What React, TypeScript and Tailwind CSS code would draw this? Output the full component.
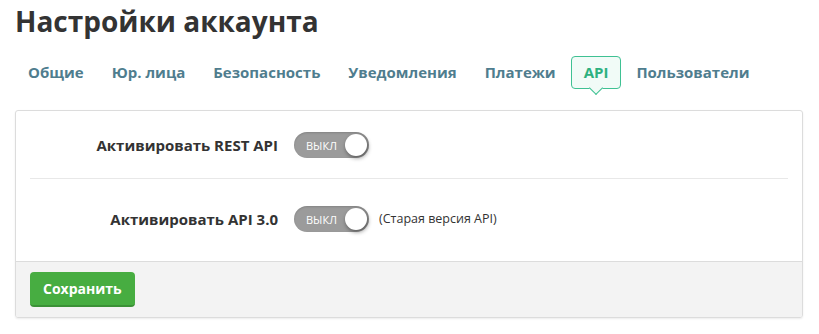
import React from "react";

const tabs = ["Общие", "Юр. лица", "Безопасность", "Уведомления", "Платежи", "API", "Пользователи"];

function Toggle() {
  return (
    <div className="relative flex h-[26px] w-[75px] shrink-0 items-center rounded-full bg-[#9b9b9b] shadow-[inset_0_1px_2px_rgba(0,0,0,0.15)]">
      <span className="pl-[12px] text-[11px] leading-none text-white">ВЫКЛ</span>
      <span className="absolute right-[2px] top-[2px] h-[22px] w-[22px] rounded-full bg-white shadow-[1px_2px_4px_rgba(0,0,0,0.45)]" />
    </div>
  );
}

export default function App() {
  return (
    <div className="min-h-[334px] bg-white px-[15px] text-[#333]" style={{ fontFamily: '"Open Sans", sans-serif' }}>
      <h1 className="pt-[5px] text-[28px] font-bold leading-[32px] text-[#333]">Настройки аккаунта</h1>
      <div className="mt-[19px] flex gap-[2px]">
        {tabs.map((t) =>
          t === "API" ? (
            <div key={t} className="relative">
              <div className="flex h-[33px] items-center rounded-[4px] border border-[#3fc193] bg-[#f1fbf7] px-[12px] text-[15px] font-bold text-[#2db17f]">
                {t}
              </div>
              <div className="absolute left-1/2 top-[27px] h-[10px] w-[10px] -translate-x-1/2 rotate-45 border-b border-r border-[#3fc193] bg-[#f1fbf7]" />
            </div>
          ) : (
            <div key={t} className="flex h-[33px] items-center px-[13px] text-[15px] font-bold text-[#4f7d8e]">
              {t}
            </div>
          )
        )}
      </div>
      <div className="mt-[21px] w-[788px] overflow-hidden rounded-[3px] border border-[#dcdcdc] shadow-[0_1px_2px_rgba(0,0,0,0.08)]">
        <div className="flex items-center pb-[20px] pt-[21px]">
          <div className="w-[262px] text-right text-[15px] font-bold">Активировать REST API</div>
          <div className="ml-[16px]">
            <Toggle />
          </div>
        </div>
        <div className="mx-[14px] border-t border-[#e8e8e8]" />
        <div className="flex items-center pb-[29px] pt-[27px]">
          <div className="w-[262px] text-right text-[15px] font-bold">Активировать API 3.0</div>
          <div className="ml-[16px]">
            <Toggle />
          </div>
          <span className="ml-[10px] text-[12.5px]">(Старая версия API)</span>
        </div>
        <div className="border-t border-[#dcdcdc] bg-[#f3f3f3] px-[14px] pb-[10px] pt-[10px]">
          <button className="h-[35px] rounded-[4px] border-b-2 border-[#3b9136] bg-[#47ad41] px-[13px] text-[14px] font-bold text-white">
            Сохранить
          </button>
        </div>
      </div>
    </div>
  );
}
